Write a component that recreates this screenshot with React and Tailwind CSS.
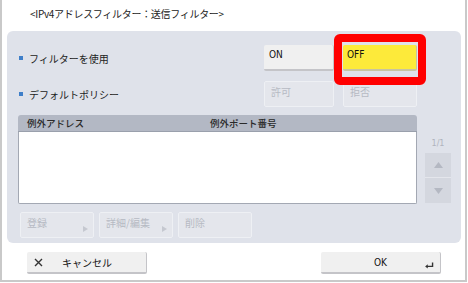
import React from "react";

const JP = { fontFamily: '"Noto Sans CJK JP", "Noto Sans", sans-serif' };
const COND = { fontFamily: '"DejaVu Sans Condensed", "Liberation Sans Narrow", "Liberation Sans", sans-serif' };

function Tri() {
  return (
    <svg width="5" height="6" viewBox="0 0 5 6" className="absolute right-[5px] bottom-[5px]">
      <path d="M0 0 L5 3 L0 6 Z" fill="#c5c8d0" />
    </svg>
  );
}

function DisBtn({ label, w, tri }) {
  return (
    <div
      className={`relative h-[26px] ${w} bg-[#e4e6ec] border border-[#eef0f4] rounded-[2px] text-[10px] text-[#b6bac3] pl-[6px] pt-[3px] leading-[14px]`}
      style={JP}
    >
      {label}
      {tri && <Tri />}
    </div>
  );
}

export default function App() {
  return (
    <div className="w-[468px] h-[283px] bg-white overflow-hidden">
      <div className="w-[467px] h-[282px] border-x-2 border-b-2 border-[#c9c9c9] flex flex-col">
        <div className="h-[31px] pl-[28px] pt-[7px] text-[10px] tracking-[-0.3px] text-[#222] leading-[14px]" style={JP}>
          &lt;IPv4アドレスフィルター：送信フィルター&gt;
        </div>
        <div className="relative ml-[5px] w-[454px] h-[212px] bg-[#dfe2ea] rounded-[6px] flex flex-col pl-[11px] pt-[14px]">
          {/* row 1 */}
          <div className="flex items-center h-[26px]">
            <div className="w-[246px] flex items-center gap-[6px] text-[10px] text-[#222]" style={JP}>
              <span className="w-[4px] h-[4px] bg-[#3f7fc9] inline-block ml-[1px]" />
              フィルターを使用
            </div>
            <div
              className="h-[26px] w-[70px] bg-[#f0f0f0] border-b-2 border-r border-[#c4c4c8] rounded-[2px] text-[10px] text-[#111] pl-[5px] pt-[4px] leading-[12px]"
              style={COND}
            >
              ON
            </div>
            <div
              className="ml-[9px] h-[26px] w-[74px] bg-[#fdea3a] border-b-2 border-r border-[#c8c4a0] rounded-[2px] text-[10px] text-[#111] pl-[4px] pt-[4px] leading-[12px]"
              style={COND}
            >
              OFF
            </div>
          </div>
          {/* row 2 */}
          <div className="flex items-center h-[26px] mt-[10px]">
            <div className="w-[246px] flex items-center gap-[6px] text-[10px] text-[#222]" style={JP}>
              <span className="w-[4px] h-[4px] bg-[#3f7fc9] inline-block ml-[1px]" />
              デフォルトポリシー
            </div>
            <DisBtn label="許可" w="w-[70px]" />
            <div className="ml-[9px]">
              <DisBtn label="拒否" w="w-[74px]" />
            </div>
          </div>
          {/* list area */}
          <div className="flex mt-[8px]">
            <div className="w-[399px] h-[89px] flex flex-col rounded-t-[3px] overflow-hidden">
              <div
                className="h-[17px] bg-[#b3b8c4] border-b border-[#9aa0ac] flex items-center text-[9.5px] text-[#2a2a2a] font-medium"
                style={JP}
              >
                <span className="ml-[9px] w-[183px]">例外アドレス</span>
                <span>例外ポート番号</span>
              </div>
              <div className="flex-1 bg-white border-x border-b border-[#a3a8b3] rounded-b-[2px]" />
            </div>
            <div className="ml-[8px] w-[26px] flex flex-col items-center">
              <div className="mt-[22px] h-[16px] text-[9px] text-[#b0b4be] leading-[12px]" style={COND}>1/1</div>
              <div className="w-[26px] h-[25px] bg-[#d4d7df] flex items-center justify-center border-b border-[#e4e6ec]">
                <svg width="9" height="6" viewBox="0 0 9 6"><path d="M4.5 0 L9 6 L0 6 Z" fill="#b4b8c2" /></svg>
              </div>
              <div className="w-[26px] h-[25px] bg-[#d4d7df] flex items-center justify-center">
                <svg width="9" height="6" viewBox="0 0 9 6"><path d="M0 0 L9 0 L4.5 6 Z" fill="#b4b8c2" /></svg>
              </div>
            </div>
          </div>
          {/* bottom buttons */}
          <div className="flex gap-[5px] mt-[8px] ml-[2px]">
            <DisBtn label="登録" w="w-[74px]" tri />
            <DisBtn label="詳細/編集" w="w-[74px]" tri />
            <DisBtn label="削除" w="w-[74px]" />
          </div>
          {/* red highlight overlay */}
          <div className="absolute left-[327px] top-[3px] w-[92px] h-[51px] border-[8px] border-[#ff0000] rounded-[6px]" />
        </div>
        {/* footer */}
        <div className="flex mt-[9px]">
          <div
            className="ml-[25px] w-[120px] h-[22px] bg-[#f0f0f0] border-b-2 border-r border-[#c4c4c8] rounded-[2px] flex items-center text-[10px] text-[#111]"
            style={JP}
          >
            <svg width="9" height="9" viewBox="0 0 9 9" className="ml-[7px]">
              <path d="M1 1 L8 8 M8 1 L1 8" stroke="#333" strokeWidth="1.4" />
            </svg>
            <span className="ml-[19px]">キャンセル</span>
          </div>
          <div
            className="relative ml-[174px] w-[120px] h-[22px] bg-[#f0f0f0] border-b-2 border-r border-[#c4c4c8] rounded-[2px] flex items-center justify-center text-[10px] text-[#111]"
            style={COND}
          >
            OK
            <svg width="9" height="7" viewBox="0 0 10 8" className="absolute right-[6px] bottom-[3px]">
              <path d="M8.5 0.5 L8.5 5 L2 5" stroke="#333" strokeWidth="1.6" fill="none" />
              <path d="M0 5 L3 2.5 L3 7.5 Z" fill="#333" />
            </svg>
          </div>
        </div>
      </div>
    </div>
  );
}
